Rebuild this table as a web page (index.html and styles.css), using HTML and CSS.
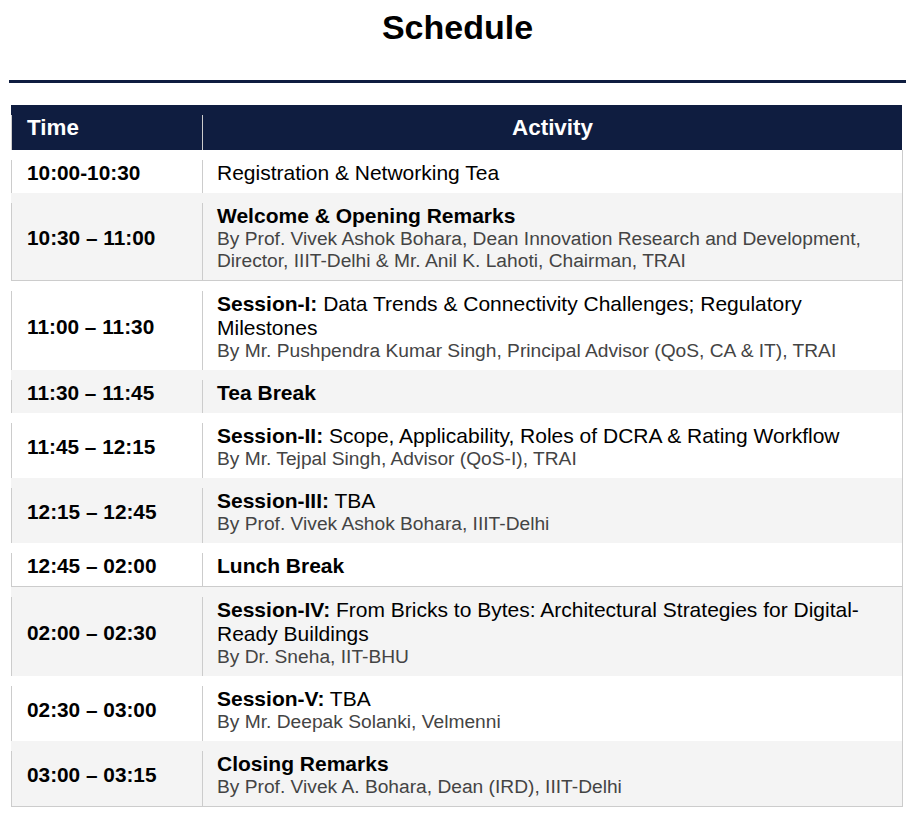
FILE: index.html
```html
<!DOCTYPE html>
<html lang="en">
<head>
<meta charset="utf-8">
<title>Schedule</title>
<link rel="stylesheet" href="styles.css">
</head>
<body>
<div class="page">
  <h1 class="title">Schedule</h1>
  <div class="rule"></div>
  <div class="table">
    <div class="head">
      <div class="hcell htime">Time</div>
      <div class="hcell hact">Activity</div>
    </div>
    <div class="body">
      <div class="row">
        <div class="time">10:00-10:30</div>
        <div class="act"><div class="main">Registration &amp; Networking Tea</div></div>
      </div>
      <div class="row alt sep">
        <div class="time">10:30 – 11:00</div>
        <div class="act"><div class="main"><b>Welcome &amp; Opening Remarks</b></div><div class="sub">By Prof. Vivek Ashok Bohara, Dean Innovation Research and Development, Director, IIIT-Delhi &amp; Mr. Anil K. Lahoti, Chairman, TRAI</div></div>
      </div>
      <div class="row">
        <div class="time">11:00 – 11:30</div>
        <div class="act"><div class="main"><b>Session-I:</b> Data Trends &amp; Connectivity Challenges; Regulatory Milestones</div><div class="sub">By Mr. Pushpendra Kumar Singh, Principal Advisor (QoS, CA &amp; IT), TRAI</div></div>
      </div>
      <div class="row alt">
        <div class="time">11:30 – 11:45</div>
        <div class="act"><div class="main"><b>Tea Break</b></div></div>
      </div>
      <div class="row">
        <div class="time">11:45 – 12:15</div>
        <div class="act"><div class="main"><b>Session-II:</b> Scope, Applicability, Roles of DCRA &amp; Rating Workflow</div><div class="sub">By Mr. Tejpal Singh, Advisor (QoS-I), TRAI</div></div>
      </div>
      <div class="row alt">
        <div class="time">12:15 – 12:45</div>
        <div class="act"><div class="main"><b>Session-III:</b> TBA</div><div class="sub">By Prof. Vivek Ashok Bohara, IIIT-Delhi</div></div>
      </div>
      <div class="row sep">
        <div class="time">12:45 – 02:00</div>
        <div class="act"><div class="main"><b>Lunch Break</b></div></div>
      </div>
      <div class="row alt">
        <div class="time">02:00 – 02:30</div>
        <div class="act"><div class="main"><b>Session-IV:</b> From Bricks to Bytes: Architectural Strategies for Digital-Ready Buildings</div><div class="sub">By Dr. Sneha, IIT-BHU</div></div>
      </div>
      <div class="row">
        <div class="time">02:30 – 03:00</div>
        <div class="act"><div class="main"><b>Session-V:</b> TBA</div><div class="sub">By Mr. Deepak Solanki, Velmenni</div></div>
      </div>
      <div class="row alt">
        <div class="time">03:00 – 03:15</div>
        <div class="act"><div class="main"><b>Closing Remarks</b></div><div class="sub">By Prof. Vivek A. Bohara, Dean (IRD), IIIT-Delhi</div></div>
      </div>
    </div>
  </div>
</div>
</body>
</html>
```
FILE: styles.css
```css
html, body {
  margin: 0;
  padding: 0;
  background: #ffffff;
}
body {
  font-family: "Liberation Sans", Arial, sans-serif;
  color: #000;
}
.page {
  padding: 8px 9px 0;
}
.title {
  margin: 0;
  text-align: center;
  font-size: 34px;
  font-weight: bold;
  line-height: normal;
  color: #000;
}
.rule {
  height: 3px;
  background: #0f1d40;
  margin: 33px 0 22px;
}
.table {
  margin: 0 3px 0 2px;
}
.head {
  display: grid;
  grid-template-columns: 191px 1fr;
  background: #0f1d40;
  padding-top: 10px;
  margin-right: 1px;
}
.hcell {
  color: #fff;
  font-weight: bold;
  font-size: 22.4px;
  line-height: 25px;
  padding: 0 15px 10px;
  border-left: 1px solid #cccccc;
}
.htime {
  padding-left: 15px;
}
.hact {
  text-align: center;
}
.body {
  border-right: 1px solid #cccccc;
  border-bottom: 1px solid #cccccc;
}
.row {
  display: grid;
  grid-template-columns: 191px 1fr;
  padding-top: 10px;
  background: #ffffff;
}
.row.alt {
  background: #f4f4f4;
}
.row.sep {
  border-bottom: 1px solid #cccccc;
}
.time {
  display: flex;
  align-items: center;
  border-left: 1px solid #cccccc;
  padding: 1px 14px 8px 15px;
  font-weight: bold;
  font-size: 20.8px;
  line-height: 24px;
}
.act {
  border-left: 1px solid #cccccc;
  padding: 1px 15px 8px 14px;
}
.main {
  font-size: 21px;
  line-height: 24px;
  color: #000;
}
.main b {
  font-weight: bold;
}
.sub {
  font-size: 19.2px;
  line-height: 22px;
  color: #444444;
}
```
